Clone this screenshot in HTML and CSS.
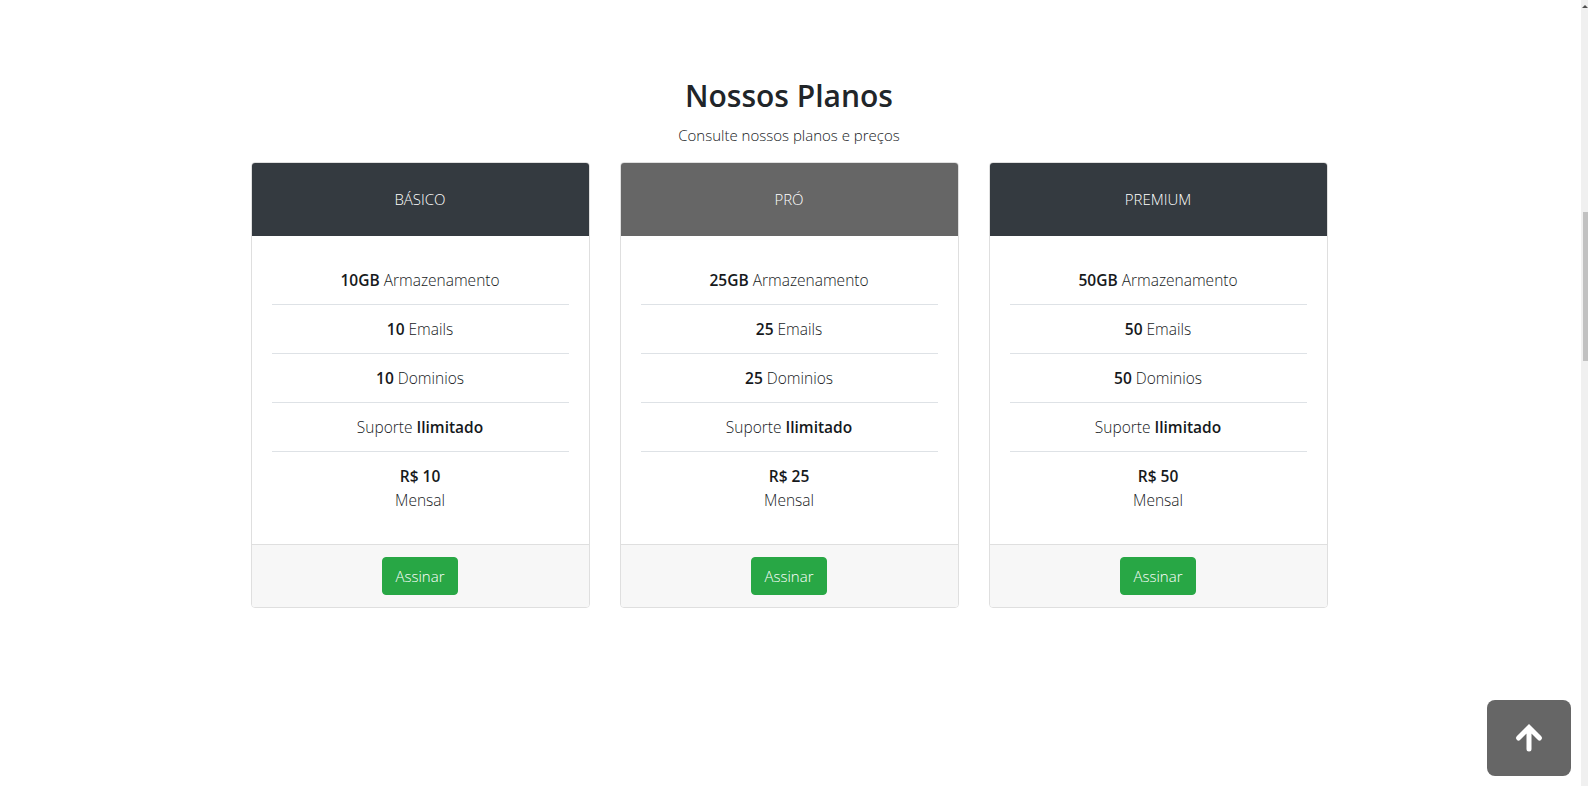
FILE: index.html
```html
<!DOCTYPE html>
<html lang="pt-BR">
<head>
<meta charset="utf-8">
<title>Nossos Planos</title>
<link rel="stylesheet" href="styles.css">
</head>
<body>
<main class="page">
  <section class="plans">
    <h2 class="plans-title">Nossos Planos</h2>
    <p class="plans-subtitle">Consulte nossos planos e preços</p>
    <div class="plans-grid">
      <article class="card">
        <header class="card-header dark">BÁSICO</header>
        <div class="card-body">
          <ul class="features">
            <li><b>10GB</b> Armazenamento</li>
            <li><b>10</b> Emails</li>
            <li><b>10</b> Dominios</li>
            <li>Suporte <b>Ilimitado</b></li>
            <li><b>R$ 10</b><br>Mensal</li>
          </ul>
        </div>
        <footer class="card-footer"><button class="btn-subscribe">Assinar</button></footer>
      </article>
      <article class="card">
        <header class="card-header gray">PRÓ</header>
        <div class="card-body">
          <ul class="features">
            <li><b>25GB</b> Armazenamento</li>
            <li><b>25</b> Emails</li>
            <li><b>25</b> Dominios</li>
            <li>Suporte <b>Ilimitado</b></li>
            <li><b>R$ 25</b><br>Mensal</li>
          </ul>
        </div>
        <footer class="card-footer"><button class="btn-subscribe">Assinar</button></footer>
      </article>
      <article class="card">
        <header class="card-header dark">PREMIUM</header>
        <div class="card-body">
          <ul class="features">
            <li><b>50GB</b> Armazenamento</li>
            <li><b>50</b> Emails</li>
            <li><b>50</b> Dominios</li>
            <li>Suporte <b>Ilimitado</b></li>
            <li><b>R$ 50</b><br>Mensal</li>
          </ul>
        </div>
        <footer class="card-footer"><button class="btn-subscribe">Assinar</button></footer>
      </article>
    </div>
  </section>
</main>

<a class="back-to-top" href="#" aria-label="Voltar ao topo">
  <svg width="30" height="30" viewBox="0 0 30 30" aria-hidden="true">
    <path d="M15 26 V5 M4.5 15 L15 4.5 L25.5 15" fill="none" stroke="#fff" stroke-width="5" stroke-linecap="round" stroke-linejoin="miter"/>
  </svg>
</a>

<div class="scrollbar" aria-hidden="true">
  <div class="scrollbar-arrow"></div>
  <div class="scrollbar-thumb"></div>
</div>
</body>
</html>
```

FILE: styles.css
```css
html, body {
  margin: 0;
  padding: 0;
  background: #fff;
}

body {
  font-family: "Open Sans", "Noto Sans", sans-serif;
  font-weight: 300;
  font-size: 15.5px;
  line-height: 24px;
  color: #16191c;
  overflow: hidden;
}

.page {
  padding-right: 10px;
}

.plans {
  display: flex;
  flex-direction: column;
  align-items: center;
  padding-top: 78px;
}

.plans-title {
  margin: 0;
  font-size: 30px;
  line-height: 36px;
  font-weight: 600;
  color: #212529;
}

.plans-subtitle {
  margin: 9px 0 15px;
  font-size: 15px;
  line-height: 24px;
}

.plans-grid {
  display: grid;
  grid-template-columns: repeat(3, 339px);
  column-gap: 30px;
}

.card {
  border: 1px solid #dfdfdf;
  border-radius: 4px;
  overflow: hidden;
  display: flex;
  flex-direction: column;
  background: #fff;
}

.card-header {
  padding: 24px 20px;
  line-height: 25px;
  text-align: center;
  color: #fff;
  font-size: 15px;
  font-weight: 300;
}

.card-header.dark { background: #343a40; }
.card-header.gray { background: #666666; }

.card-body {
  padding: 20px;
}

.features {
  list-style: none;
  margin: 0;
  padding: 0;
  text-align: center;
}

.features li {
  padding: 12px 0;
  border-bottom: 1px solid #dee2e6;
}

.features li:last-child {
  border-bottom: 0;
}

.features b {
  font-weight: 600;
}

.card-footer {
  background: #f7f7f7;
  border-top: 1px solid #dfdfdf;
  padding: 12px 20px;
  display: flex;
  justify-content: center;
}

.btn-subscribe {
  font-family: inherit;
  font-weight: 300;
  font-size: 15px;
  line-height: 24px;
  color: #fff;
  background: #28a745;
  border: 1px solid #28a745;
  border-radius: 4px;
  padding: 6px 12px;
  cursor: pointer;
}

.back-to-top {
  position: fixed;
  right: 17px;
  bottom: 10px;
  width: 84px;
  height: 76px;
  border-radius: 8px;
  background: #666666;
  display: flex;
  align-items: center;
  justify-content: center;
}

.scrollbar {
  position: fixed;
  top: 0;
  right: 0;
  width: 7px;
  height: 100%;
  background: #f0f0f0;
}

.scrollbar-arrow {
  position: absolute;
  top: 5px;
  left: 1px;
  width: 0;
  height: 0;
  border-left: 3px solid transparent;
  border-right: 3px solid transparent;
  border-bottom: 3px solid #505050;
}

.scrollbar-thumb {
  position: absolute;
  top: 212px;
  left: 2px;
  width: 5px;
  height: 149px;
  background: #c1c1c1;
}
```
